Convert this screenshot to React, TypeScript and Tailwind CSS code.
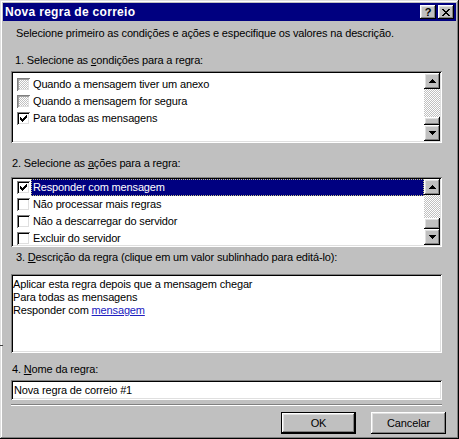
import React from "react";

const RAISED =
  "shadow-[inset_-1px_-1px_#000,inset_1px_1px_#fff,inset_-2px_-2px_#808080,inset_2px_2px_#dfdfdf]";
const SUNKEN =
  "shadow-[inset_1px_1px_#808080,inset_-1px_-1px_#fff,inset_2px_2px_#000,inset_-2px_-2px_#dfdfdf]";

function CheckBox({ checked, disabled }: { checked?: boolean; disabled?: boolean }) {
  return (
    <div
      className={
        "relative w-[13px] h-[13px] shrink-0 " +
        (disabled
          ? "shadow-[inset_1px_1px_#808080,inset_-1px_-1px_#fff,inset_2px_2px_#a0a0a0,inset_-2px_-2px_#dfdfdf] bg-[image:repeating-conic-gradient(#fff_0_25%,#c0c0c0_0_50%)] bg-size-[2px_2px]"
          : SUNKEN + " bg-white")
      }
    >
      {checked && (
        <svg className="absolute left-0 top-0" width="13" height="13" viewBox="0 0 13 13" shapeRendering="crispEdges">
          <path
            d="M3 5h1v3h-1zM4 6h1v3h-1zM5 7h1v3h-1zM6 6h1v3h-1zM7 5h1v3h-1zM8 4h1v3h-1zM9 3h1v3h-1z"
            fill="#000"
          />
        </svg>
      )}
    </div>
  );
}

function Arrow({ up }: { up?: boolean }) {
  return (
    <svg width="7" height="4" viewBox="0 0 7 4" shapeRendering="crispEdges">
      {up ? (
        <path d="M3 0h1v1h1v1h1v1h1v1H0V3h1V2h1V1h1z" fill="#000" />
      ) : (
        <path d="M0 0h7v1H6v1H5v1H4v1H3V3H2V2H1V1H0z" fill="#000" />
      )}
    </svg>
  );
}

function ScrollBar({ thumbH }: { thumbH: number }) {
  return (
    <div className="w-[16px] h-full flex flex-col bg-[image:repeating-conic-gradient(#fff_0_25%,#c0c0c0_0_50%)] bg-size-[2px_2px]">
      <div className={"h-[16px] bg-[#c0c0c0] flex items-center justify-center " + RAISED}>
        <Arrow up />
      </div>
      <div className="flex-1" />
      <div className={"bg-[#c0c0c0] " + RAISED} style={{ height: thumbH }} />
      <div className={"h-[16px] bg-[#c0c0c0] flex items-center justify-center " + RAISED}>
        <Arrow />
      </div>
    </div>
  );
}

function Row({
  text,
  checked,
  disabled,
  selected,
}: {
  text: string;
  checked?: boolean;
  disabled?: boolean;
  selected?: boolean;
}) {
  return (
    <div className="h-[17px] shrink-0 flex items-center pl-[4px]">
      <CheckBox checked={checked} disabled={disabled} />
      <div
        className={
          "ml-[1px] h-[17px] flex-1 flex items-center pl-[2px] leading-[13px] " +
          (selected ? "bg-[#000080] text-white outline-1 outline-dotted outline-[#c0c080] -outline-offset-1" : "")
        }
      >
        {text}
      </div>
    </div>
  );
}

export default function App() {
  return (
    <div
      className="relative w-[459px] h-[439px] bg-[#c0c0c0] p-[3px] flex flex-col text-[11px] tracking-[-0.15px] text-black shadow-[inset_-1px_-1px_#000,inset_1px_1px_#dfdfdf,inset_-2px_-2px_#808080,inset_2px_2px_#fff]"
      style={{ fontFamily: '"Liberation Sans", Arial, sans-serif' }}
    >
      {/* Title bar */}
      <div className="h-[18px] shrink-0 bg-[#000080] flex items-center pl-[2px] pr-[2px]">
        <span className="text-white font-bold text-[12px] tracking-[0.3px] leading-[14px]">Nova regra de correio</span>
        <div className="ml-auto flex gap-[2px]">
          <div className={"w-[16px] h-[14px] bg-[#c0c0c0] flex items-center justify-center font-bold text-[11px] leading-none " + RAISED}>
            ?
          </div>
          <div className={"w-[16px] h-[14px] bg-[#c0c0c0] flex items-center justify-center " + RAISED}>
            <svg width="8" height="7" viewBox="0 0 8 7" shapeRendering="crispEdges">
              <path
                d="M0 0h2v1h1v1h2V1h1V0h2v1H7v1H6v1H5v1h1v1h1v1h1v1H6V6H5V5H3v1H2v1H0V6h1V5h1V4h1V3H2V2H1V1H0z"
                fill="#000"
              />
            </svg>
          </div>
        </div>
      </div>

      {/* Body */}
      <div className="flex-1 flex flex-col pl-[8px]">
        <p className="mt-[6px] pl-[5px] leading-[13px]">
          Selecione primeiro as condições e ações e especifique os valores na descrição.
        </p>

        <p className="mt-[14px] pl-[4px] leading-[13px]">
          1. Selecione as <span className="underline underline-offset-[1px]">c</span>ondições para a regra:
        </p>

        <div className={"mt-[4px] w-[431px] h-[72px] bg-white p-[2px] flex " + SUNKEN}>
          <div className="flex-1 flex flex-col overflow-hidden pt-[3px]">
            <Row text="Quando a mensagem tiver um anexo" disabled />
            <Row text="Quando a mensagem for segura" disabled />
            <Row text="Para todas as mensagens" checked />
          </div>
          <ScrollBar thumbH={8} />
        </div>

        <p className="mt-[14px] pl-[1px] leading-[13px]">
          2. Selecione as <span className="underline underline-offset-[1px]">a</span>ções para a regra:
        </p>

        <div className={"mt-[7px] w-[431px] h-[70px] bg-white p-[2px] flex " + SUNKEN}>
          <div className="flex-1 flex flex-col overflow-hidden">
            <Row text="Responder com mensagem" checked selected />
            <Row text="Não processar mais regras" />
            <Row text="Não a descarregar do servidor" />
            <Row text="Excluir do servidor" />
          </div>
          <ScrollBar thumbH={11} />
        </div>

        <p className="mt-[4px] pl-[5px] leading-[13px]">
          3. <span className="underline underline-offset-[1px]">D</span>escrição da regra (clique em um valor sublinhado para editá-lo):
        </p>

        <div className={"mt-[10px] w-[431px] h-[79px] bg-white pt-[4px] pl-[2px] leading-[13px] " + SUNKEN}>
          <div>Aplicar esta regra depois que a mensagem chegar</div>
          <div>Para todas as mensagens</div>
          <div>
            Responder com{" "}
            <span className="text-[#2020c0] underline underline-offset-[1px]">mensagem</span>
          </div>
        </div>

        <p className="mt-[10px] pl-[1px] leading-[13px]">
          4. <span className="underline underline-offset-[1px]">N</span>ome da regra:
        </p>

        <div className={"mt-[4px] w-[431px] h-[20px] bg-white flex items-center pl-[3px] " + SUNKEN}>
          Nova regra de correio #1
        </div>

        <div className="mt-[4px] w-[431px] h-[2px] border-t border-t-[#808080] border-b border-b-white" />

        <div className="mt-[6px] flex justify-end gap-[15px] pr-[10px]">
          <div className="w-[75px] h-[22px] border border-black">
            <div className={"w-full h-full flex items-center justify-center " + RAISED}>OK</div>
          </div>
          <div className={"w-[75px] h-[22px] flex items-center justify-center " + RAISED}>Cancelar</div>
        </div>
      </div>

      <div className="absolute left-0 top-[345px] w-[3px] h-[1px] bg-[#404040]" />
    </div>
  );
}
